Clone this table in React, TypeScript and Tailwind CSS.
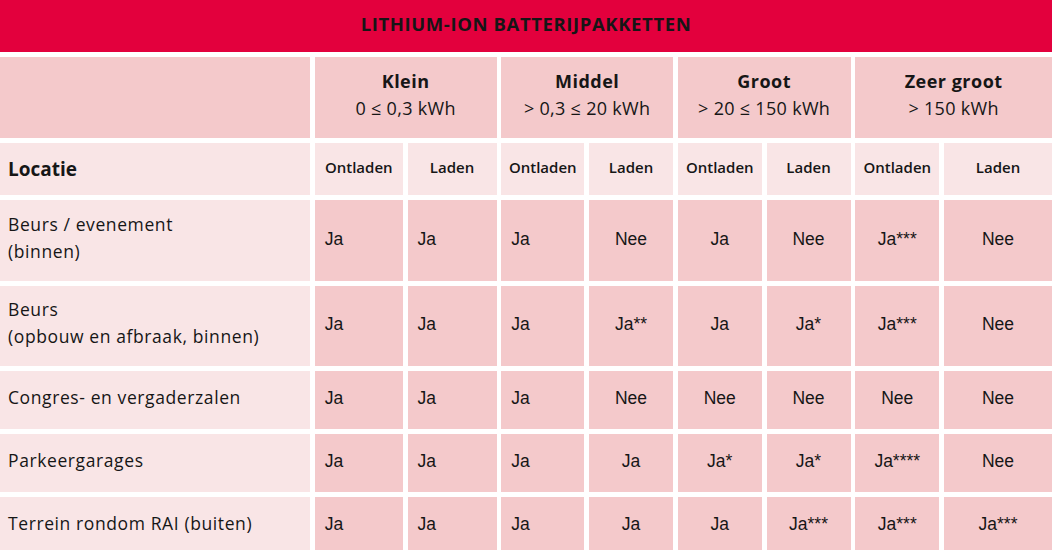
import React from "react";

const groups = [
  { name: "Klein", range: "0  ≤ 0,3 kWh" },
  { name: "Middel", range: "> 0,3 ≤ 20 kWh" },
  { name: "Groot", range: "> 20 ≤ 150 kWh" },
  { name: "Zeer groot", range: "> 150 kWh" },
];

const rows: { label: string[]; cells: string[] }[] = [
  { label: ["Beurs / evenement", "(binnen)"], cells: ["Ja", "Ja", "Ja", "Nee", "Ja", "Nee", "Ja***", "Nee"] },
  { label: ["Beurs", "(opbouw en afbraak, binnen)"], cells: ["Ja", "Ja", "Ja", "Ja**", "Ja", "Ja*", "Ja***", "Nee"] },
  { label: ["Congres- en vergaderzalen"], cells: ["Ja", "Ja", "Ja", "Nee", "Nee", "Nee", "Nee", "Nee"] },
  { label: ["Parkeergarages"], cells: ["Ja", "Ja", "Ja", "Ja", "Ja*", "Ja*", "Ja****", "Nee"] },
  { label: ["Terrein rondom RAI (buiten)"], cells: ["Ja", "Ja", "Ja", "Ja", "Ja", "Ja***", "Ja***", "Ja***"] },
];

export default function App() {
  return (
    <div className="w-[1052px] h-[550px] overflow-hidden bg-white text-[#161616] font-['Open_Sans',sans-serif]">
      <div className="h-[52px] bg-[#e3003d] flex items-center justify-center pb-[4px]">
        <span className="text-[18.5px] font-bold tracking-[0.6px]">LITHIUM-ION BATTERIJPAKKETTEN</span>
      </div>
      <div className="mt-[5px] grid grid-cols-[310px_88px_89px_83px_84px_84px_84px_84px_1fr] grid-rows-[81px_52px_81px_80px_58px_58px_58px] gap-x-[4.75px] gap-y-[5px]">
        <div className="bg-[#f4c9cb]" />
        {groups.map((g) => (
          <div key={g.name} className="col-span-2 bg-[#f4c9cb] flex flex-col items-center justify-center leading-[27px] pb-[5px]">
            <span className="text-[18px] font-bold tracking-[0.5px]">{g.name}</span>
            <span className="text-[18px] tracking-[0.3px]">{g.range}</span>
          </div>
        ))}
        <div className="bg-[#f9e5e6] flex items-center pl-[8px] text-[19px] font-bold">Locatie</div>
        {groups.flatMap((g) =>
          ["Ontladen", "Laden"].map((s) => (
            <div key={g.name + s} className="bg-[#f9e5e6] flex items-center justify-center text-[15px] font-semibold pb-[4px]">
              {s}
            </div>
          ))
        )}
        {rows.map((r) => (
          <React.Fragment key={r.label.join()}>
            <div className="bg-[#f9e5e6] flex flex-col justify-center pl-[8px] text-[17.5px] tracking-[0.6px] leading-[27px] pb-[6px]">
              {r.label.map((l) => (
                <span key={l}>{l}</span>
              ))}
            </div>
            {r.cells.map((c, i) => (
              <div
                key={i}
                className={
                  "bg-[#f4c9cb] flex items-center text-[17.5px] font-['Liberation_Sans',sans-serif] pb-[3px] " +
                  (i < 3 ? "pl-[10px]" : "justify-center")
                }
              >
                {c}
              </div>
            ))}
          </React.Fragment>
        ))}
      </div>
    </div>
  );
}
